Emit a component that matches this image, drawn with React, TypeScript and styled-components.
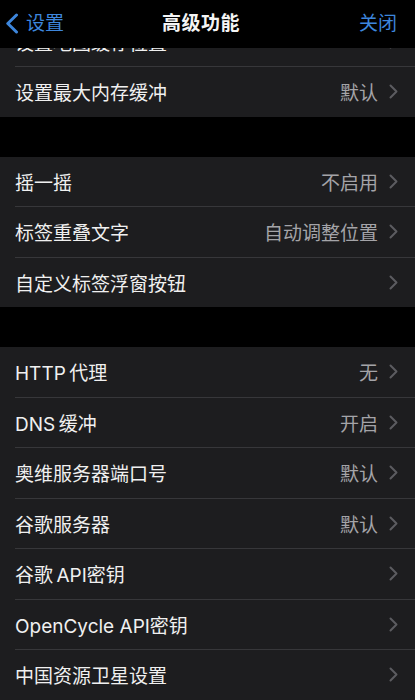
import React from "react";
import styled, { createGlobalStyle } from "styled-components";

const GlobalStyle = createGlobalStyle`
  html, body {
    margin: 0;
    padding: 0;
    background: #000;
  }
  body {
    font-family: Inter, "Noto Sans CJK SC", sans-serif;
    -webkit-font-smoothing: antialiased;
  }
  * { box-sizing: border-box; }
`;

const Screen = styled.div`
  width: 415px;
  height: 700px;
  overflow: hidden;
  background: #000;
  display: flex;
  flex-direction: column;
`;

const NavBar = styled.header`
  flex-shrink: 0;
  height: 48px;
  background: #000;
  display: grid;
  grid-template-columns: 1fr auto 1fr;
  align-items: center;
  padding: 0 18px 2px 5px;
  line-height: 1;
`;

const BackButton = styled.div`
  display: flex;
  align-items: center;
  gap: 7px;
  color: #3d86dc;
  font-size: 19px;
  justify-self: start;
`;

const NavTitle = styled.div`
  color: #f4f4f4;
  font-size: 19px;
  font-weight: 600;
  letter-spacing: 0.5px;
`;

const NavAction = styled.div`
  justify-self: end;
  color: #3d86dc;
  font-size: 19px;
`;

const Content = styled.main`
  display: flex;
  flex-direction: column;
  gap: 40px;
`;

const Group = styled.section`
  background: #1d1d1f;
  display: flex;
  flex-direction: column;
`;

const Row = styled.div`
  padding-left: 15px;
  display: flex;
  &:last-child > div {
    border-bottom: none;
    height: 49.5px;
  }
`;

const RowInner = styled.div<{ $peek?: boolean }>`
  flex: 1;
  height: ${(p) => (p.$peek ? "19px" : "50.5px")};
  border-bottom: 1px solid #37373a;
  overflow: hidden;
  display: flex;
  flex-direction: column;
  justify-content: flex-end;
`;

const RowBody = styled.div`
  flex-shrink: 0;
  height: 49.5px;
  display: flex;
  align-items: center;
  padding-right: 17px;
`;

const Label = styled.span`
  flex: 1;
  color: #f0f0f0;
  font-size: 19px;
  white-space: nowrap;
`;

const Value = styled.span`
  color: #a4a4a8;
  font-size: 19px;
  margin-right: 11px;
  white-space: nowrap;
`;

const Chevron = () => (
  <svg width="9" height="15" viewBox="0 0 9 15" fill="none">
    <path
      d="M1.5 1.5 L7.5 7.5 L1.5 13.5"
      stroke="#5c5c60"
      strokeWidth="2"
      strokeLinecap="round"
      strokeLinejoin="round"
    />
  </svg>
);

const BackChevron = () => (
  <svg width="14" height="21" viewBox="0 0 14 21" fill="none">
    <path
      d="M11.5 2 L2.8 10.5 L11.5 19"
      stroke="#3d86dc"
      strokeWidth="3"
      strokeLinecap="round"
      strokeLinejoin="round"
    />
  </svg>
);

type Item = { label: string; value?: string; peek?: boolean };

const groups: Item[][] = [
  [
    { label: "设置地图缓存位置", peek: true },
    { label: "设置最大内存缓冲", value: "默认" },
  ],
  [
    { label: "摇一摇", value: "不启用" },
    { label: "标签重叠文字", value: "自动调整位置" },
    { label: "自定义标签浮窗按钮" },
  ],
  [
    { label: "HTTP\u2009代理", value: "无" },
    { label: "DNS\u2009缓冲", value: "开启" },
    { label: "奥维服务器端口号", value: "默认" },
    { label: "谷歌服务器", value: "默认" },
    { label: "谷歌\u2009API密钥" },
    { label: "OpenCycle API密钥" },
    { label: "中国资源卫星设置" },
  ],
];

export default function App() {
  return (
    <Screen>
      <GlobalStyle />
      <NavBar>
        <BackButton>
          <BackChevron />
          <span>设置</span>
        </BackButton>
        <NavTitle>高级功能</NavTitle>
        <NavAction>关闭</NavAction>
      </NavBar>
      <Content>
        {groups.map((g, gi) => (
          <Group key={gi}>
            {g.map((it) => (
              <Row key={it.label}>
                <RowInner $peek={it.peek}>
                  <RowBody>
                    <Label>{it.label}</Label>
                    {it.value && <Value>{it.value}</Value>}
                    <Chevron />
                  </RowBody>
                </RowInner>
              </Row>
            ))}
          </Group>
        ))}
      </Content>
    </Screen>
  );
}
